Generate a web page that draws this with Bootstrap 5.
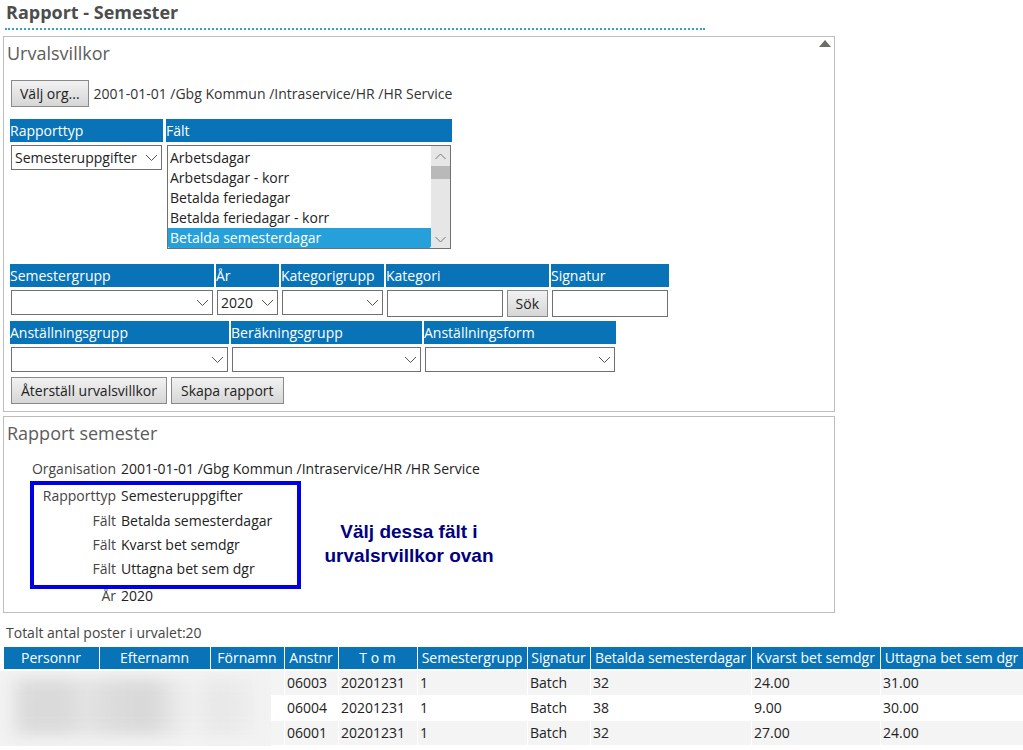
<!DOCTYPE html>
<html lang="sv">
<head>
<meta charset="utf-8">
<meta name="viewport" content="width=device-width, initial-scale=1">
<title>Rapport - Semester</title>
<link href="https://cdn.jsdelivr.net/npm/bootstrap@5.3.0/dist/css/bootstrap.min.css" rel="stylesheet">
<style>
  body { font-family: "Open Sans", "Noto Sans", sans-serif; font-size: 14px; line-height: 20px; color: #333; background: #fff; }
  .page-title { font-size: 18px; line-height: 24px; font-weight: 700; color: #4d4d4d; max-width: 700px; margin: 0 0 6px 5px; padding: 0 0 4px 1px; border-bottom: 2px dotted #35a3bd; }
  .panel { position: relative; max-width: 832px; margin: 0 3px 4px; border: 1px solid #bdbdbd; padding: 0 6px; }
  .panel-title { font-size: 18px; line-height: 24px; font-weight: 400; color: #5c5c5c; margin: 4px 0 0 -3px; }
  .collapse-toggle { position: absolute; top: 3px; right: 3px; border: 0; padding: 0; background: none; line-height: 0; }
  .grey-btn { font-size: 14px; line-height: 20px; height: 27px; padding: 0 8px; color: #222; border: 1px solid #8a8a8a; border-radius: 0; background: linear-gradient(#f2f2f2, #d6d6d6); white-space: nowrap; }
  .grey-btn:hover { border-color: #555; background: #ddd; }
  .org-row { display: flex; align-items: center; gap: 5px; margin: 15px 1px 12px; }
  .action-row { display: flex; gap: 4px; margin: 5px 1px 7px; }
  .action-row .grey-btn { padding: 0 9px; }
  .head-label { display: block; height: 23px; line-height: 24px; color: #fff; background: #0873b7; white-space: nowrap; }
  .field-body { display: flex; gap: 4px; padding: 3px 1px 0; }
  .row-first { gap: 3px; margin-bottom: 15px; }
  .row-next { gap: 2px; }
  .box-select, .box-input { width: 100%; min-width: 0; height: 25px; border: 1px solid #707070; border-radius: 0; color: #222; background-color: #fff; }
  .box-select { appearance: none; padding: 0 20px 0 3px; background-image: url("data:image/svg+xml,%3Csvg xmlns='http://www.w3.org/2000/svg' width='13' height='8'%3E%3Cpath d='M1 1l5.5 5.5L12 1' fill='none' stroke='%23555'/%3E%3C/svg%3E"); background-repeat: no-repeat; background-position: right 3px center; }
  .box-input { height: 27px; padding: 0 4px; }
  .list-wrap { display: flex; flex: 1; height: 104px; border: 1px solid #707070; background: #fff; }
  .list-select { flex: 1; min-width: 0; height: 102px; border: 0; padding: 2px 0 0; overflow: hidden; color: #222; outline: 0; scrollbar-width: none; }
  .list-select::-webkit-scrollbar { display: none; }
  .list-select option { height: 20px; min-height: 20px; line-height: 20px; padding: 0 0 0 2px; }
  .list-select option:checked { color: #fff; background: linear-gradient(#26a0da, #26a0da); }
  .list-scroll { width: 19px; background: #e6e6e6; display: flex; flex-direction: column; align-items: center; }
  .list-scroll i { width: 100%; height: 13px; background: #b9b9b9; }
  .w-a { flex: 0 1 153px; } .w-b { flex: 0 1 286px; }
  .w-c { flex: 0 1 204px; } .w-d { flex: 0 1 63px; } .w-e { flex: 0 1 103px; } .w-f { flex: 0 1 163px; } .w-g { flex: 0 1 118px; }
  .w-h { flex: 0 1 219px; } .w-i { flex: 0 1 191px; } .w-j { flex: 0 1 192px; }
  .facts-area { position: relative; margin: 14px 0 6px; }
  .facts { display: grid; grid-template-columns: 106px 1fr; grid-template-rows: 23px 21px 20px 20px 23px 20px; column-gap: 5px; row-gap: 4px; margin: 0; }
  .facts dt { font-weight: 400; text-align: right; color: #444; }
  .facts dd { margin: 0; color: #222; }
  .mark-frame { position: absolute; left: 20px; top: 22px; width: 271px; height: 108px; border: 4px solid #0000e6; pointer-events: none; }
  .mark-note { position: absolute; left: 304px; top: 61px; width: 190px; margin: 0; font: 700 19px/24px "Liberation Sans", Arial, sans-serif; color: #000080; text-align: center; }
  .total-line { margin: 10px 0 4px 6px; line-height: 20px; color: #444; }
  .result-wrap { margin-left: 4px; }
  .result { width: 100%; table-layout: fixed; border-collapse: separate; border-spacing: 0; white-space: nowrap; }
  .result th { height: 22px; padding: 0 1px 0 0; font-weight: 400; text-align: center; color: #fff; background: #0873b7; border-right: 1px solid #fff; }
  .result td { height: 25px; padding: 0 0 0 2px; color: #222; border-right: 1px solid #fff; border-bottom: 1px solid #fff; }
  .result tbody tr:nth-child(odd) td { background: #f4f4f4; }
  .result tbody tr:first-child td { height: 27px; border-top: 2px solid #fff; }
  .result th:last-child, .result td:last-child { border-right: 0; }
  .redacted { position: absolute; left: -4px; top: 0; width: 271px; height: 76px; overflow: hidden; background: #f3f3f3; }
  .redacted::before { content: ""; position: absolute; inset: 8px 0 12px; filter: blur(8px); background: linear-gradient(90deg, #f3f3f3 6px, #dadada 24px, #dadada 66px, #e4e4e4 84px, #dcdcdc 110px, #d8d8d8 150px, #ebebeb 180px, #f0f0f0 196px, #e7e7e7 215px, #ebebeb 240px, #f3f3f3 266px); }
</style>
</head>
<body>
<h1 class="page-title">Rapport - Semester</h1>

<main>
  <section class="panel">
    <h2 class="panel-title">Urvalsvillkor</h2>
    <button class="collapse-toggle" type="button" aria-label="Fäll ihop"><svg width="12" height="7" viewBox="0 0 12 7"><path d="M0 7L6 0l6 7z" fill="#6e6a68"/></svg></button>
    <form>
      <div class="org-row">
        <button class="grey-btn" type="button">Välj org...</button>
        <span>2001-01-01 /Gbg Kommun /Intraservice/HR /HR Service</span>
      </div>

      <div class="d-flex row-first">
        <div class="w-a">
          <label class="head-label" for="rapporttyp">Rapporttyp</label>
          <div class="field-body"><select class="box-select" id="rapporttyp"><option>Semesteruppgifter</option></select></div>
        </div>
        <div class="w-b">
          <label class="head-label" for="falt">Fält</label>
          <div class="field-body">
            <div class="list-wrap">
              <select class="list-select" id="falt" multiple size="5">
                <option>Arbetsdagar</option>
                <option>Arbetsdagar - korr</option>
                <option>Betalda feriedagar</option>
                <option>Betalda feriedagar - korr</option>
                <option selected>Betalda semesterdagar</option>
              </select>
              <div class="list-scroll" aria-hidden="true">
                <svg width="19" height="20"><path d="M4.500 13L9.500 8l5 5" fill="none" stroke="#777"/></svg>
                <i></i>
                <svg class="mt-auto" width="19" height="18"><path d="M4.500 7l5 5 5-5" fill="none" stroke="#777"/></svg>
              </div>
            </div>
          </div>
        </div>
      </div>

      <div class="d-flex row-next">
        <div class="w-c"><label class="head-label" for="semgrupp">Semestergrupp</label><div class="field-body"><select class="box-select" id="semgrupp"><option></option></select></div></div>
        <div class="w-d"><label class="head-label" for="ar">År</label><div class="field-body"><select class="box-select" id="ar"><option>2020</option></select></div></div>
        <div class="w-e"><label class="head-label" for="katgrupp">Kategorigrupp</label><div class="field-body"><select class="box-select" id="katgrupp"><option></option></select></div></div>
        <div class="w-f"><label class="head-label" for="kategori">Kategori</label><div class="field-body"><input class="box-input" type="text" id="kategori"><button class="grey-btn" type="button">Sök</button></div></div>
        <div class="w-g"><label class="head-label" for="signatur">Signatur</label><div class="field-body"><input class="box-input" type="text" id="signatur"></div></div>
      </div>

      <div class="d-flex row-next mt-1">
        <div class="w-h"><label class="head-label" for="anstgrupp">Anställningsgrupp</label><div class="field-body"><select class="box-select" id="anstgrupp"><option></option></select></div></div>
        <div class="w-i"><label class="head-label" for="bergrupp">Beräkningsgrupp</label><div class="field-body"><select class="box-select" id="bergrupp"><option></option></select></div></div>
        <div class="w-j"><label class="head-label" for="anstform">Anställningsform</label><div class="field-body"><select class="box-select" id="anstform"><option></option></select></div></div>
      </div>

      <div class="action-row">
        <button class="grey-btn" type="reset">Återställ urvalsvillkor</button>
        <button class="grey-btn" type="button">Skapa rapport</button>
      </div>
    </form>
  </section>

  <section class="panel">
    <h2 class="panel-title">Rapport semester</h2>
    <div class="facts-area">
      <dl class="facts">
        <dt>Organisation</dt><dd>2001-01-01 /Gbg Kommun /Intraservice/HR /HR Service</dd>
        <dt>Rapporttyp</dt><dd>Semesteruppgifter</dd>
        <dt>Fält</dt><dd>Betalda semesterdagar</dd>
        <dt>Fält</dt><dd>Kvarst bet semdgr</dd>
        <dt>Fält</dt><dd>Uttagna bet sem dgr</dd>
        <dt>År</dt><dd>2020</dd>
      </dl>
      <div class="mark-frame"></div>
      <p class="mark-note">Välj dessa fält i urvalsrvillkor ovan</p>
    </div>
  </section>

  <p class="total-line">Totalt antal poster i urvalet:20</p>
  <div class="result-wrap">
    <table class="result">
      <colgroup>
        <col style="width:96px"><col style="width:111px"><col style="width:74px"><col style="width:54px"><col style="width:79px"><col style="width:110px"><col style="width:63px"><col style="width:161px"><col style="width:129px"><col>
      </colgroup>
      <thead>
        <tr><th>Personnr</th><th>Efternamn</th><th>Förnamn</th><th>Anstnr</th><th>T o m</th><th>Semestergrupp</th><th>Signatur</th><th>Betalda semesterdagar</th><th>Kvarst bet semdgr</th><th>Uttagna bet sem dgr</th></tr>
      </thead>
      <tbody>
        <tr><td colspan="3" class="position-relative"><div class="redacted"></div></td><td>06003</td><td>20201231</td><td>1</td><td>Batch</td><td>32</td><td>24.00</td><td>31.00</td></tr>
        <tr><td colspan="3"></td><td>06004</td><td>20201231</td><td>1</td><td>Batch</td><td>38</td><td>9.00</td><td>30.00</td></tr>
        <tr><td colspan="3"></td><td>06001</td><td>20201231</td><td>1</td><td>Batch</td><td>32</td><td>27.00</td><td>24.00</td></tr>
      </tbody>
    </table>
  </div>
</main>
<script src="https://cdn.jsdelivr.net/npm/bootstrap@5.3.0/dist/js/bootstrap.bundle.min.js"></script>
</body>
</html>
